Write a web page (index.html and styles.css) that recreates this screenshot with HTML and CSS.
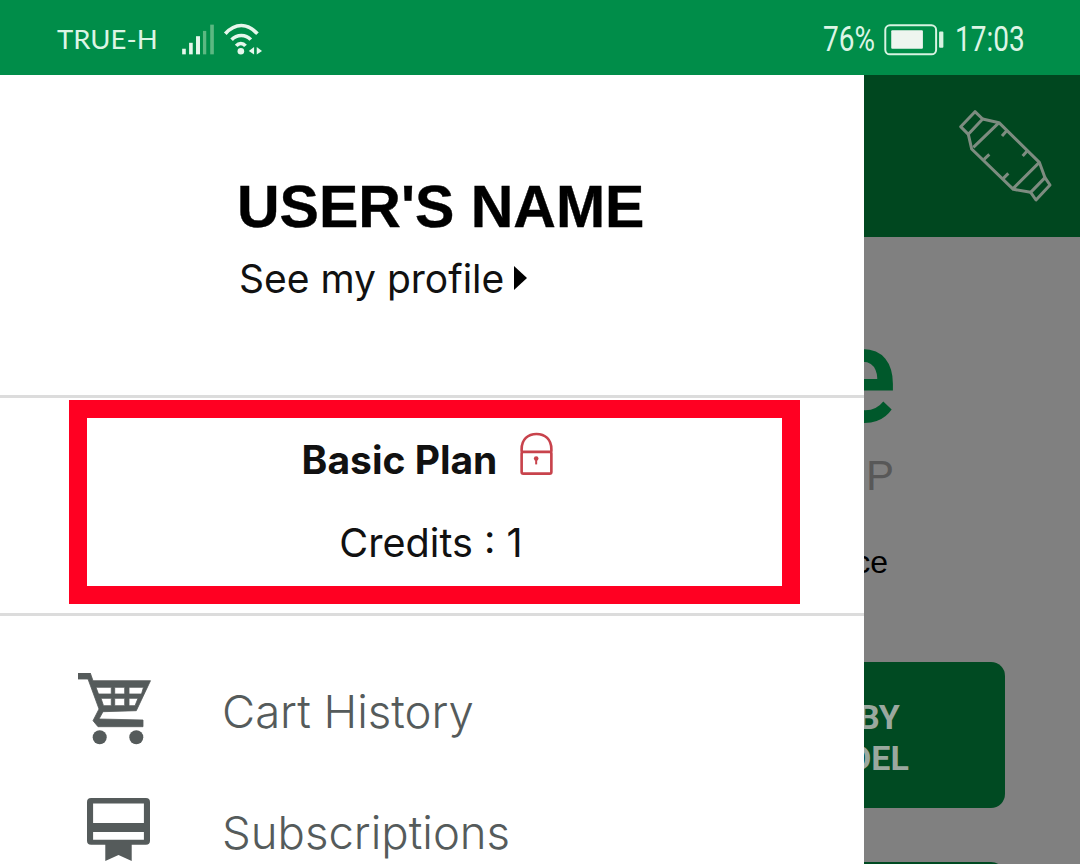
FILE: index.html
```html
<!DOCTYPE html>
<html lang="en">
<head>
    <meta charset="UTF-8">
    <meta name="viewport" content="width=device-width, initial-scale=1.0">
    <title>Menu</title>
    <link rel="stylesheet" href="styles.css">
</head>
<body>
    <div class="status-bar">
        <div class="status-left">
            <span class="carrier">TRUE-H</span>
            <svg class="signal" viewBox="540 60 105 100">
                <rect x="543" y="138" width="11" height="17" fill="#e6f7ec"/>
                <rect x="564" y="120" width="11" height="35" fill="#e6f7ec"/>
                <rect x="585" y="100" width="12" height="55" fill="#e6f7ec"/>
                <rect x="606" y="84" width="10" height="71" fill="#5cb882"/>
                <rect x="628" y="65" width="11" height="90" fill="#5cb882"/>
            </svg>
            <svg class="wifi" viewBox="665 60 130 105">
                <path d="M675 95C705 62 742 62 772 95M694 113C710 96 737 96 752 113M708 132C716 122 728 122 736 132" fill="none" stroke="#e6f7ec" stroke-width="11"/>
                <circle cx="722" cy="148" r="10" fill="#e6f7ec"/>
                <path d="M762 135V158L746 147ZM770 135V158L786 147Z" fill="#e6f7ec"/>
            </svg>
        </div>
        <div class="status-right">
            <span class="status-num percent">76%</span>
            <svg class="battery" viewBox="248 62 186 100">
                <rect x="254" y="69" width="154" height="88" rx="14" fill="none" stroke="#d8f3e2" stroke-width="6"/>
                <rect x="272" y="84" width="96" height="56" rx="3" fill="#eef5ef"/>
                <rect x="417" y="88" width="13" height="49" rx="3" fill="#d8f3e2"/>
            </svg>
            <span class="status-num clock">17:03</span>
        </div>
    </div>

    <div class="page">
        <div class="back-header">
            <svg class="bottle" viewBox="450 300 330 330">
                <g fill="none" stroke="#7d8c80" stroke-width="9" stroke-linejoin="round">
                    <path d="M482 380L525 335L548 357L505 403Z"/>
                    <path d="M692 577L735 533L750 555L708 600Z"/>
                    <path d="M505 403L515 447L640 568L692 577M548 357L597 368L718 487L735 533"/>
                    <path d="M520 442L597 368M640 565L718 487"/>
                    <path d="M620 392L606 408M682 452L668 468M568 463L552 478M625 520L610 535"/>
                </g>
            </svg>
        </div>
        <div class="back-content">
            <div class="back-title">e</div>
            <div class="back-sub">P</div>
            <div class="back-text">ce</div>
            <div class="back-button">BY<br>DEL</div>
            <div class="back-button second"></div>
        </div>

        <div class="drawer">
            <div class="profile">
                <div class="user-name">USER'S NAME</div>
                <div class="profile-link">See my profile<span class="caret"></span></div>
            </div>
            <div class="plan-section">
                <div class="plan-box">
                    <div class="plan-row">
                        <span class="plan-name">Basic Plan</span>
                        <svg class="lock" viewBox="715 35 112 136">
                            <g fill="none" stroke="#c8434c" stroke-width="8" stroke-linejoin="round">
                                <path d="M726 98V90C726 60 745 44 771 44C797 44 816 60 816 90V98"/>
                                <rect x="726" y="98" width="90" height="66" rx="5"/>
                            </g>
                            <circle cx="770" cy="118" r="7" fill="#c8434c"/>
                            <rect x="767" y="118" width="6" height="18" fill="#c8434c"/>
                        </svg>
                    </div>
                    <div class="credits">Credits : 1</div>
                </div>
            </div>
            <div class="menu">
                <div class="menu-item">
                    <div class="menu-icon">
                        <svg class="cart" viewBox="0 0 74 74">
                            <path fill="#555b5b" stroke="#555b5b" stroke-width="0.8" fill-rule="evenodd" d="M0 0H12.3L15 7.7H72.5L58.3 37.7L25 38.7L21 46L65 47V53.7H20L15 47.7L21 36L10 6H0ZM18 14.3L20.5 21H33.3V14.3ZM36.7 14.3V21H46.7V14.3ZM51 14.3V21H63.5L65.5 14.3ZM23 25.3L25.5 32.7H33.3V25.3ZM36.7 25.3V32.7H46.7V25.3ZM51 25.3V32.7H57L60 25.3Z"/>
                            <circle cx="21.7" cy="64.3" r="7" fill="#555b5b"/>
                            <circle cx="58.3" cy="64.3" r="7" fill="#555b5b"/>
                        </svg>
                    </div>
                    <span>Cart History</span>
                </div>
                <div class="menu-item">
                    <div class="menu-icon">
                        <svg class="card" viewBox="0 0 62 62">
                            <path fill="#555b5b" fill-rule="evenodd" d="M4 0H58A4 4 0 0 1 62 4V42A4 4 0 0 1 58 46H44V62L31 56L18 62V46H4A4 4 0 0 1 0 42V4A4 4 0 0 1 4 0ZM6 5.5V24.5H56V5.5ZM6 33.5V41H56V33.5Z"/>
                        </svg>
                    </div>
                    <span>Subscriptions</span>
                </div>
            </div>
        </div>
    </div>
</body>
</html>
```

FILE: styles.css
```css
* {
    box-sizing: border-box;
}
html, body {
    margin: 0;
    padding: 0;
    height: 864px;
    overflow: hidden;
}
body {
    font-family: 'Inter', sans-serif;
    background-color: #808080;
}
.status-bar {
    height: 75px;
    background-color: #008d49;
    color: #dcf5e5;
    display: flex;
    justify-content: space-between;
    align-items: center;
    padding: 3px 56px 0 57px;
}
.status-left, .status-right {
    display: flex;
    align-items: center;
}
.carrier {
    font-family: 'Lato', sans-serif;
    font-size: 27.5px;
    margin: 0 23px 2px 0;
}
.signal {
    width: 35px;
    height: 33px;
    margin-right: 6px;
}
.wifi {
    width: 43px;
    height: 35px;
}
.status-right {
    font-family: 'Roboto', sans-serif;
    font-size: 35px;
}
/* the status font is narrower than anything installed */
.status-num {
    display: inline-block;
    white-space: nowrap;
    transform: scaleX(0.8);
    transform-origin: left center;
}
.percent {
    width: 54px;
}
.clock {
    width: 69px;
}
.battery {
    width: 62px;
    height: 33px;
    margin: 0 10px 0 6px;
}
.page {
    position: relative;
    height: 789px;
    overflow: hidden;
}
.back-header {
    height: 162px;
    background-color: #00471f;
    display: flex;
    justify-content: flex-end;
    padding: 25px 20px 0 0;
}
.bottle {
    width: 110px;
    height: 110px;
}
.back-content {
    font-family: 'Liberation Sans', sans-serif;
    text-align: right;
}
.back-title {
    font-family: 'Roboto', sans-serif;
    font-weight: 500;
    font-size: 135px;
    line-height: 120px;
    color: #00582b;
    padding-right: 183px;
    margin-top: 79px;
}
.back-sub {
    font-size: 42px;
    line-height: 48px;
    color: #585858;
    padding-right: 186px;
    margin-top: 16px;
}
.back-text {
    font-size: 32px;
    line-height: 40px;
    color: #000;
    padding-right: 192px;
    margin-top: 42px;
}
.back-button {
    width: 260px;
    height: 146px;
    margin: 80px 0 0 745px;
    padding: 6px 0 0 8px;
    background-color: #004a22;
    border-radius: 14px;
    color: #9aa89f;
    font-family: 'Roboto', sans-serif;
    font-size: 34px;
    font-weight: bold;
    line-height: 41px;
    text-align: center;
    display: flex;
    align-items: center;
    justify-content: center;
}
.back-button.second {
    margin-top: 54px;
}
.drawer {
    position: absolute;
    top: 0;
    left: 0;
    width: 864px;
    height: 789px;
    background-color: #fff;
}
.profile {
    height: 323px;
    border-bottom: 3px solid #dcdcdc;
    padding: 98px 0 0 237px;
}
.user-name {
    font-family: 'Liberation Sans', sans-serif;
    font-size: 59px;
    font-weight: bold;
    line-height: 68px;
    color: #000;
    -webkit-text-stroke: 0.4px #000;
}
.profile-link {
    font-size: 39px;
    line-height: 50px;
    color: #111;
    margin: 13px 0 0 2px;
    display: flex;
    align-items: center;
}
.caret {
    width: 0;
    height: 0;
    border-left: 13px solid #000;
    border-top: 12px solid transparent;
    border-bottom: 12px solid transparent;
    margin: -2px 0 0 10px;
}
.plan-section {
    height: 218px;
    border-bottom: 3px solid #dcdcdc;
    padding: 2px 0 0 69px;
}
.plan-box {
    width: 731px;
    height: 204px;
    border: 18px solid #ff0022;
    text-align: center;
    padding: 13px 12px 0 0;
}
.plan-row {
    display: flex;
    justify-content: center;
    align-items: center;
    height: 56px;
}
.plan-name {
    font-size: 39px;
    font-weight: bold;
    color: #111;
}
.lock {
    width: 37px;
    height: 45px;
    margin: -12px 0 0 21px;
}
.credits {
    font-size: 39.6px;
    line-height: 50px;
    color: #111;
    margin: 31px 0 0 5px;
}
.menu {
    padding: 35px 0 0 78px;
}
.menu-item {
    display: flex;
    align-items: center;
    height: 121px;
    font-size: 45.5px;
    font-weight: 300;
    color: #555b5b;
}
.menu-icon {
    width: 144px;
    display: flex;
    align-items: center;
    justify-content: flex-start;
}
.cart {
    width: 74px;
    height: 74px;
    margin-bottom: 4px;
}
.card {
    width: 63px;
    height: 63px;
    margin: 0 0 6px 9px;
}
```
